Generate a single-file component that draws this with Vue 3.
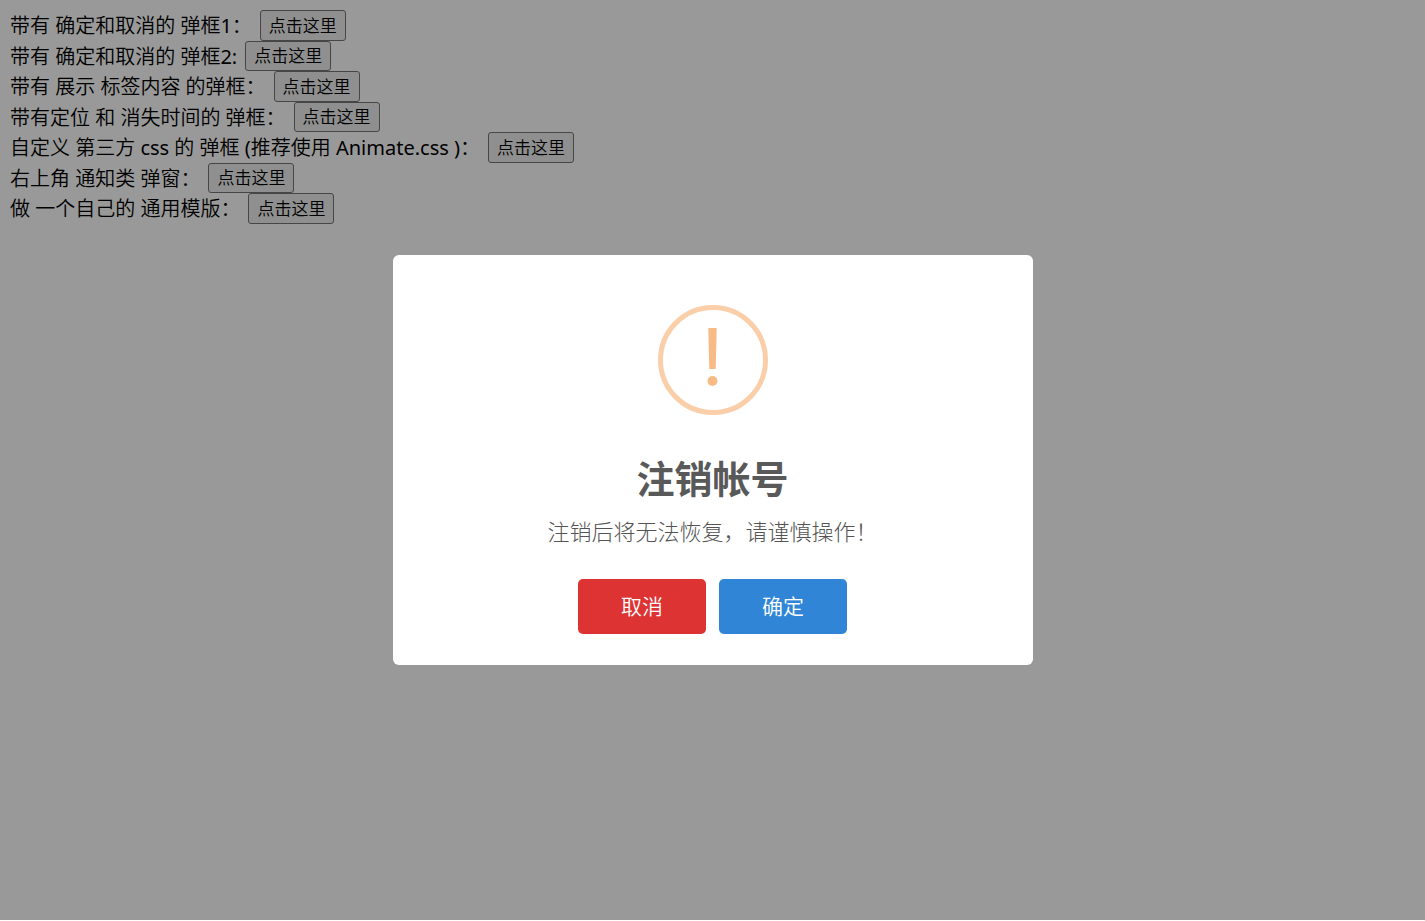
<script setup>
import { ref } from 'vue'

const demos = [
  { id: 'confirm-1', label: '带有 确定和取消的 弹框1：' },
  { id: 'confirm-2', label: '带有 确定和取消的 弹框2:' },
  { id: 'html', label: '带有 展示 标签内容 的弹框：' },
  { id: 'timer', label: '带有定位 和 消失时间的 弹框：' },
  { id: 'animate', label: '自定义 第三方 css 的 弹框 (推荐使用 Animate.css )：' },
  { id: 'toast', label: '右上角 通知类 弹窗：' },
  { id: 'template', label: '做 一个自己的 通用模版：' },
]

const open = ref(true)
</script>

<template>
  <main class="page">
    <div v-for="demo in demos" :key="demo.id" class="row">
      <span :id="demo.id">{{ demo.label }}</span>
      <button type="button" class="trigger" :aria-describedby="demo.id" @click="open = true">点击这里</button>
    </div>
  </main>

  <div v-if="open" class="overlay">
    <section class="dialog" role="dialog" aria-modal="true" aria-labelledby="dialog-title" aria-describedby="dialog-text">
      <svg class="icon" viewBox="0 0 110 110" aria-hidden="true">
        <circle cx="55" cy="55" r="52.5" fill="none" stroke="#facea8" stroke-width="5" />
        <path d="M50.3 23h8.4l-1 41h-6.4z" fill="#f8bb86" />
        <circle cx="54.5" cy="76" r="5" fill="#f8bb86" />
      </svg>
      <h2 id="dialog-title" class="title">注销帐号</h2>
      <p id="dialog-text" class="text">注销后将无法恢复，请谨慎操作！</p>
      <div class="actions">
        <button type="button" class="action cancel" @click="open = false">取消</button>
        <button type="button" class="action confirm" @click="open = false">确定</button>
      </div>
    </section>
  </div>
</template>

<style>
body {
  background: #fff;
}
</style>

<style scoped>
.page,
.trigger,
.action {
  font-family: "Noto Sans", "Noto Sans CJK SC DemiLight", "Noto Sans CJK SC", sans-serif;
}

.overlay {
  font-family: "Noto Sans", "Noto Sans CJK SC", sans-serif;
}

.page {
  padding: 10px;
  font-size: 20px;
  color: #000;
}

.row {
  display: flex;
  gap: 8px;
  height: 31px;
  line-height: 32px;
  white-space: nowrap;
}

.row:nth-child(even) {
  height: 30px;
}

.trigger {
  box-sizing: border-box;
  padding: 0 8px;
  border: 1px solid #767676;
  border-radius: 3px;
  background: #efefef;
  color: #000;
  font-size: 17px;
  line-height: 28px;
}

.overlay {
  position: fixed;
  inset: 0 0 1px;
  display: flex;
  align-items: center;
  justify-content: center;
  background: rgba(0, 0, 0, 0.4);
}

.dialog {
  box-sizing: border-box;
  display: flex;
  flex-direction: column;
  align-items: center;
  width: 640px;
  max-width: 100%;
  padding: 50px 20px 31px;
  border-radius: 6px;
  background: #fff;
}

.icon {
  width: 110px;
  height: 110px;
}

.title {
  margin: 35px 0 0;
  color: #595959;
  font-size: 38px;
  font-weight: 700;
  line-height: 56px;
}

.text {
  margin: 8px 0 0;
  color: #545454;
  font-size: 22px;
  font-weight: 300;
  line-height: 34px;
}

.actions {
  display: flex;
  gap: 13px;
  margin-top: 31px;
}

.action {
  padding: 0 43px;
  border: 0;
  border-radius: 5px;
  color: #fff;
  font-size: 21px;
  line-height: 55px;
}

.cancel {
  background: #dd3333;
}

.confirm {
  background: #3085d6;
}
</style>
